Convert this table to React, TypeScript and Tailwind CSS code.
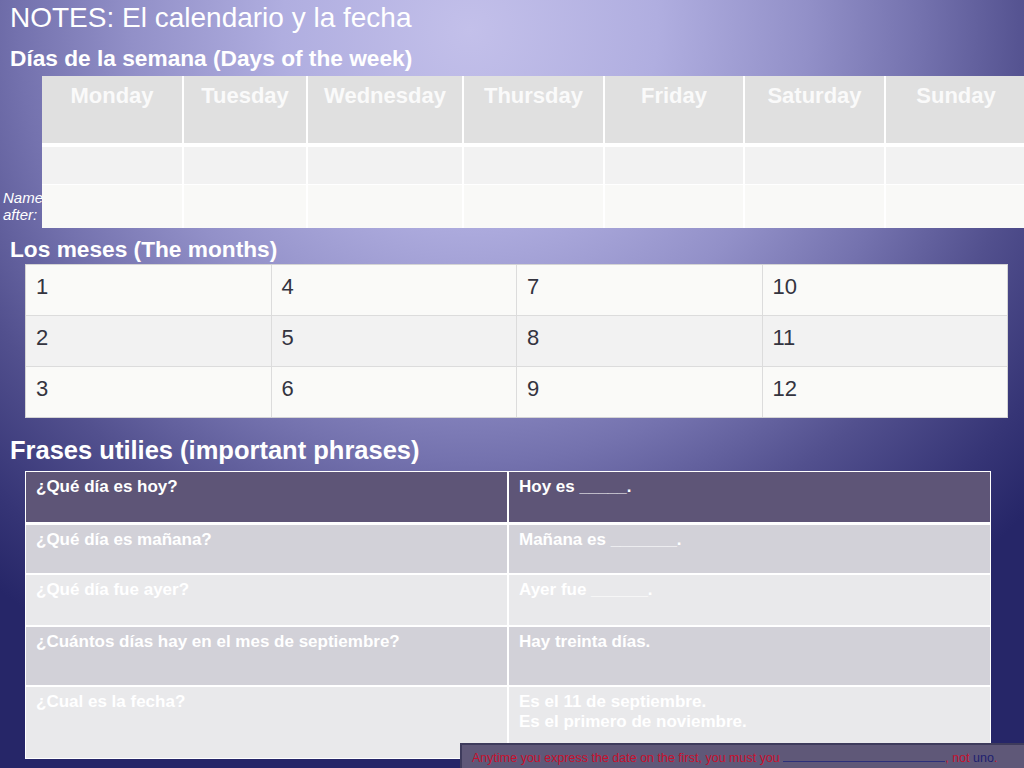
const days = ["Monday", "Tuesday", "Wednesday", "Thursday", "Friday", "Saturday", "Sunday"]

const months = [
    [1, 4, 7, 10],
    [2, 5, 8, 11],
    [3, 6, 9, 12],
]

const phrases = [
    { q: "¿Qué día es hoy?", a: ["Hoy es _____."], h: "h-[50px]", bg: "bg-[#5e5577]", gap: "" },
    { q: "¿Qué día es mañana?", a: ["Mañana es _______."], h: "h-[48px]", bg: "bg-[#d2d1d8]", gap: "mt-[3px]" },
    { q: "¿Qué día fue ayer?", a: ["Ayer fue ______."], h: "h-[50px]", bg: "bg-[#e9e9eb]", gap: "mt-[2px]" },
    { q: "¿Cuántos días hay en el mes de septiembre?", a: ["Hay treinta días."], h: "h-[58px]", bg: "bg-[#d2d1d8]", gap: "mt-[2px]" },
    { q: "¿Cual es la fecha?", a: ["Es el 11 de septiembre.", "Es el primero de noviembre."], h: "h-[71px]", bg: "bg-[#e9e9eb]", gap: "mt-[2px]" },
]

const dayCols = "grid grid-cols-[140px_122px_154px_139px_138px_139px_140px] gap-x-[2px]"

export default function App() {
    return (
        <div className="relative w-[1024px] h-[768px] overflow-hidden font-['Liberation_Sans',Arial,sans-serif] bg-[radial-gradient(ellipse_750px_720px_at_470px_30px,#c3c0ea_0%,#b0aee0_25%,#9290c8_45%,#7472ae_60%,#52508e_75%,#363576_90%,#262668_100%)]">
            <h1 className="pl-[10px] pt-[2px] text-[28px] leading-[32px] text-white">NOTES: El calendario y la fecha</h1>
            <h2 className="mt-[11px] pl-[10px] text-[22.7px] leading-[26px] font-bold text-white">Días de la semana (Days of the week)</h2>

            {/* days of the week */}
            <div className="relative mt-[5px]">
                <div className="absolute left-[3px] top-[113px] text-[15px] leading-[17px] italic text-white">
                    Named<br />after:
                </div>
                <div className="relative ml-[42px] w-[984px] bg-white">
                    <div className={dayCols}>
                        {days.map(d => (
                            <div key={d} className="h-[67px] bg-[#e0e0e0] pt-[7px] text-center text-[22px] leading-[25px] font-bold text-[#fafafa]">{d}</div>
                        ))}
                    </div>
                    <div className={`mt-[4px] ${dayCols}`}>
                        {days.map(d => <div key={d} className="h-[37px] bg-[#f2f2f2]" />)}
                    </div>
                    <div className={`mt-[1px] ${dayCols}`}>
                        {days.map(d => <div key={d} className="h-[43px] bg-[#f9f9f7]" />)}
                    </div>
                </div>
            </div>

            {/* months */}
            <h2 className="mt-[8px] pl-[10px] text-[22.7px] leading-[26px] font-bold text-white">Los meses (The months)</h2>
            <div className="mt-[2px] ml-[25px] w-[983px] grid grid-cols-4 gap-px border border-[#d4d4d4] bg-[#dcdcdc]">
                {months.map((row, i) =>
                    row.map(n => (
                        <div key={n} className={`h-[50px] pl-[10px] pt-[9px] text-[22px] leading-[25px] text-[#34343f] ${i == 1 ? "bg-[#f2f2f2]" : "bg-[#fafaf8]"}`}>{n}</div>
                    ))
                )}
            </div>

            {/* phrases */}
            <h2 className="mt-[18px] pl-[10px] text-[25.5px] leading-[29px] font-bold text-white">Frases utilies (important phrases)</h2>
            <div className="mt-[6px] ml-[25px] w-[966px] bg-white p-px flex flex-col">
                {phrases.map(p => (
                    <div key={p.q} className={`grid grid-cols-[481px_1fr] gap-x-[2px] ${p.gap}`}>
                        <div className={`${p.h} ${p.bg} pl-[10px] pt-[5px] text-[17px] leading-[20px] font-bold text-white`}>{p.q}</div>
                        <div className={`${p.h} ${p.bg} pl-[10px] pt-[5px] text-[17px] leading-[20px] font-bold text-white`}>
                            {p.a.map(l => <div key={l}>{l}</div>)}
                        </div>
                    </div>
                ))}
            </div>

            {/* note bar */}
            <div className="absolute left-[460px] bottom-0 w-[564px] h-[25px] bg-[#5f5878] border-t-2 border-l-2 border-[#3e3b5c] pl-[10px] pt-[3px] text-[12.5px] leading-[20px] text-[#c8102e] whitespace-nowrap">
                Anytime you express the date on the first, you must you{" "}
                <span className="inline-block w-[162px] border-b border-[#2c2f7a]" />
                , not <span className="text-[#1e1f70]">uno</span>.
            </div>
        </div>
    )
}
